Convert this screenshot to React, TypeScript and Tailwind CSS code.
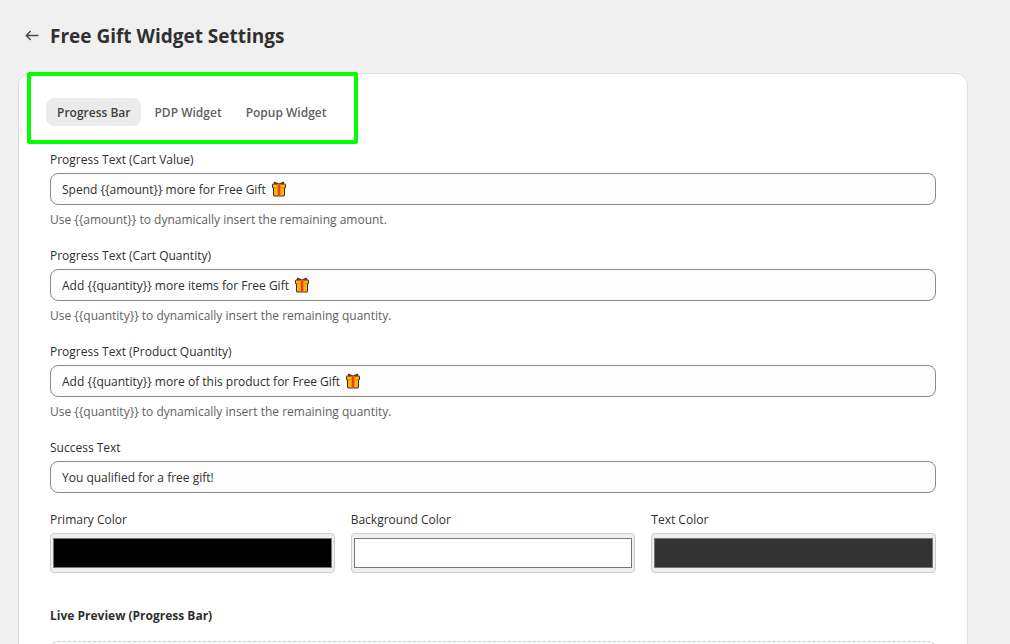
import React, { useState } from "react";

interface TextField {
  id: string;
  label: string;
  value: string;
  gift?: boolean;
  help?: string;
}

interface ColorField {
  id: string;
  label: string;
  value: string;
}

const tabs = ["Progress Bar", "PDP Widget", "Popup Widget"];

const initialTexts: TextField[] = [
  {
    id: "cart-value",
    label: "Progress Text (Cart Value)",
    value: "Spend {{amount}} more for Free Gift",
    gift: true,
    help: "Use {{amount}} to dynamically insert the remaining amount.",
  },
  {
    id: "cart-quantity",
    label: "Progress Text (Cart Quantity)",
    value: "Add {{quantity}} more items for Free Gift",
    gift: true,
    help: "Use {{quantity}} to dynamically insert the remaining quantity.",
  },
  {
    id: "product-quantity",
    label: "Progress Text (Product Quantity)",
    value: "Add {{quantity}} more of this product for Free Gift",
    gift: true,
    help: "Use {{quantity}} to dynamically insert the remaining quantity.",
  },
  {
    id: "success",
    label: "Success Text",
    value: "You qualified for a free gift!",
  },
];

const initialColors: ColorField[] = [
  { id: "primary-color", label: "Primary Color", value: "#000000" },
  { id: "background-color", label: "Background Color", value: "#ffffff" },
  { id: "text-color", label: "Text Color", value: "#333333" },
];

const GiftIcon: React.FC = () => (
  <svg className="h-4 w-[14px] shrink-0" viewBox="0 0 14 16" aria-hidden="true">
    <path
      d="M7 3.500 5.500 2.300 2.600 1 2 3.500zM7 3.500 8.500 2.300l2.900-1.300.6 2.500z"
      fill="#e8451a"
      stroke="#4a2416"
      strokeWidth=".9"
      strokeLinejoin="round"
    />
    <rect x="1.500" y="5.500" width="11" height="9.500" rx=".6" fill="#fdb50f" stroke="#3b2a1a" />
    <rect x=".5" y="3" width="13" height="4" rx=".6" fill="#fdb50f" stroke="#3b2a1a" />
    <path d="M2 6.400h10v1.400H2z" fill="#fdb50f" />
    <path d="M4.800 3.500h4.400v11H4.800z" fill="#fb8a1c" />
    <path d="M6 3.500h2v11H6z" fill="#ee3f1c" />
  </svg>
);

const App: React.FC = () => {
  const [activeTab, setActiveTab] = useState(tabs[0]);
  const [texts, setTexts] = useState(initialTexts);
  const [colors, setColors] = useState(initialColors);

  const updateText = (id: string, value: string) => {
    setTexts(texts.map((t) => (t.id === id ? { ...t, value } : t)));
  };

  const updateColor = (id: string, value: string) => {
    setColors(colors.map((c) => (c.id === id ? { ...c, value } : c)));
  };

  return (
    <div className="h-screen overflow-hidden bg-[#f0f0f0] pt-5 pr-[42px] pl-[18px] font-['Open_Sans','Noto_Sans',sans-serif] text-xs leading-[18px] text-[#303030]">
      <header className="flex h-8 items-center gap-2 pl-1">
        <button type="button" aria-label="Back">
          <svg className="h-5 w-5" viewBox="0 0 20 20" fill="#4a4a4a">
            <path
              fillRule="evenodd"
              d="M16.500 9.500a.75.75 0 0 1-.75.75h-9.690l2.720 2.720a.75.75 0 0 1-1.060 1.060l-4-4a.75.75 0 0 1 0-1.060l4-4a.75.75 0 1 1 1.060 1.060l-2.720 2.720h9.690a.75.75 0 0 1 .75.75"
            />
          </svg>
        </button>
        <h1 className="text-[19px] font-bold">Free Gift Widget Settings</h1>
      </header>

      <main className="relative mt-[21px] rounded-xl border border-[#dedede] bg-white px-[31px] pt-6 pb-8">
        {/* Highlight around the tabs */}
        <div className="pointer-events-none absolute -top-0.5 left-2 h-[72px] w-[331px] rounded-xs border-4 border-[#00ff00]" />

        <div role="tablist" className="-ml-1 flex gap-0.5">
          {tabs.map((tab) => (
            <button
              key={tab}
              type="button"
              role="tab"
              aria-selected={activeTab === tab}
              onClick={() => setActiveTab(tab)}
              className={`h-7 rounded-lg px-[11px] pt-0.5 font-semibold ${
                activeTab === tab
                  ? "bg-[#ebebeb] text-[#404040]"
                  : "text-[#616161]"
              }`}
            >
              {tab}
            </button>
          ))}
        </div>

        <form className="mt-[23px] flex flex-col gap-4">
          {texts.map((field) => (
            <div key={field.id} className="flex flex-col gap-1">
              <label htmlFor={field.id} className="pt-0.5">
                {field.label}
              </label>
              <div className="flex h-8 items-center gap-1.5 rounded-lg border border-[#8a8a8a] bg-[#fdfdfd] px-[11px]">
                <input
                  id={field.id}
                  type="text"
                  value={field.value}
                  onChange={(e) => updateText(field.id, e.target.value)}
                  className="field-sizing-content max-w-full bg-transparent pt-0.5 outline-none"
                />
                {field.gift && <GiftIcon />}
              </div>
              {field.help && (
                <p className="pt-0.5 text-[#616161]">{field.help}</p>
              )}
            </div>
          ))}

          <div className="grid grid-cols-3 gap-4">
            {colors.map((color) => (
              <div key={color.id} className="flex flex-col gap-1">
                <label htmlFor={color.id} className="pt-0.5">
                  {color.label}
                </label>
                <input
                  id={color.id}
                  type="color"
                  value={color.value}
                  onChange={(e) => updateColor(color.id, e.target.value)}
                  className="h-10 w-full rounded-sm border border-[#cccccc] bg-[#efefef] p-0"
                />
              </div>
            ))}
          </div>
        </form>

        <section className="mt-8">
          <h2 className="pt-0.5 font-bold">Live Preview (Progress Bar)</h2>
          <div className="mt-4 h-24 rounded-lg border border-dashed border-[#c9cccf] bg-[#fafbfb]" />
        </section>
      </main>
    </div>
  );
};

export default App;
